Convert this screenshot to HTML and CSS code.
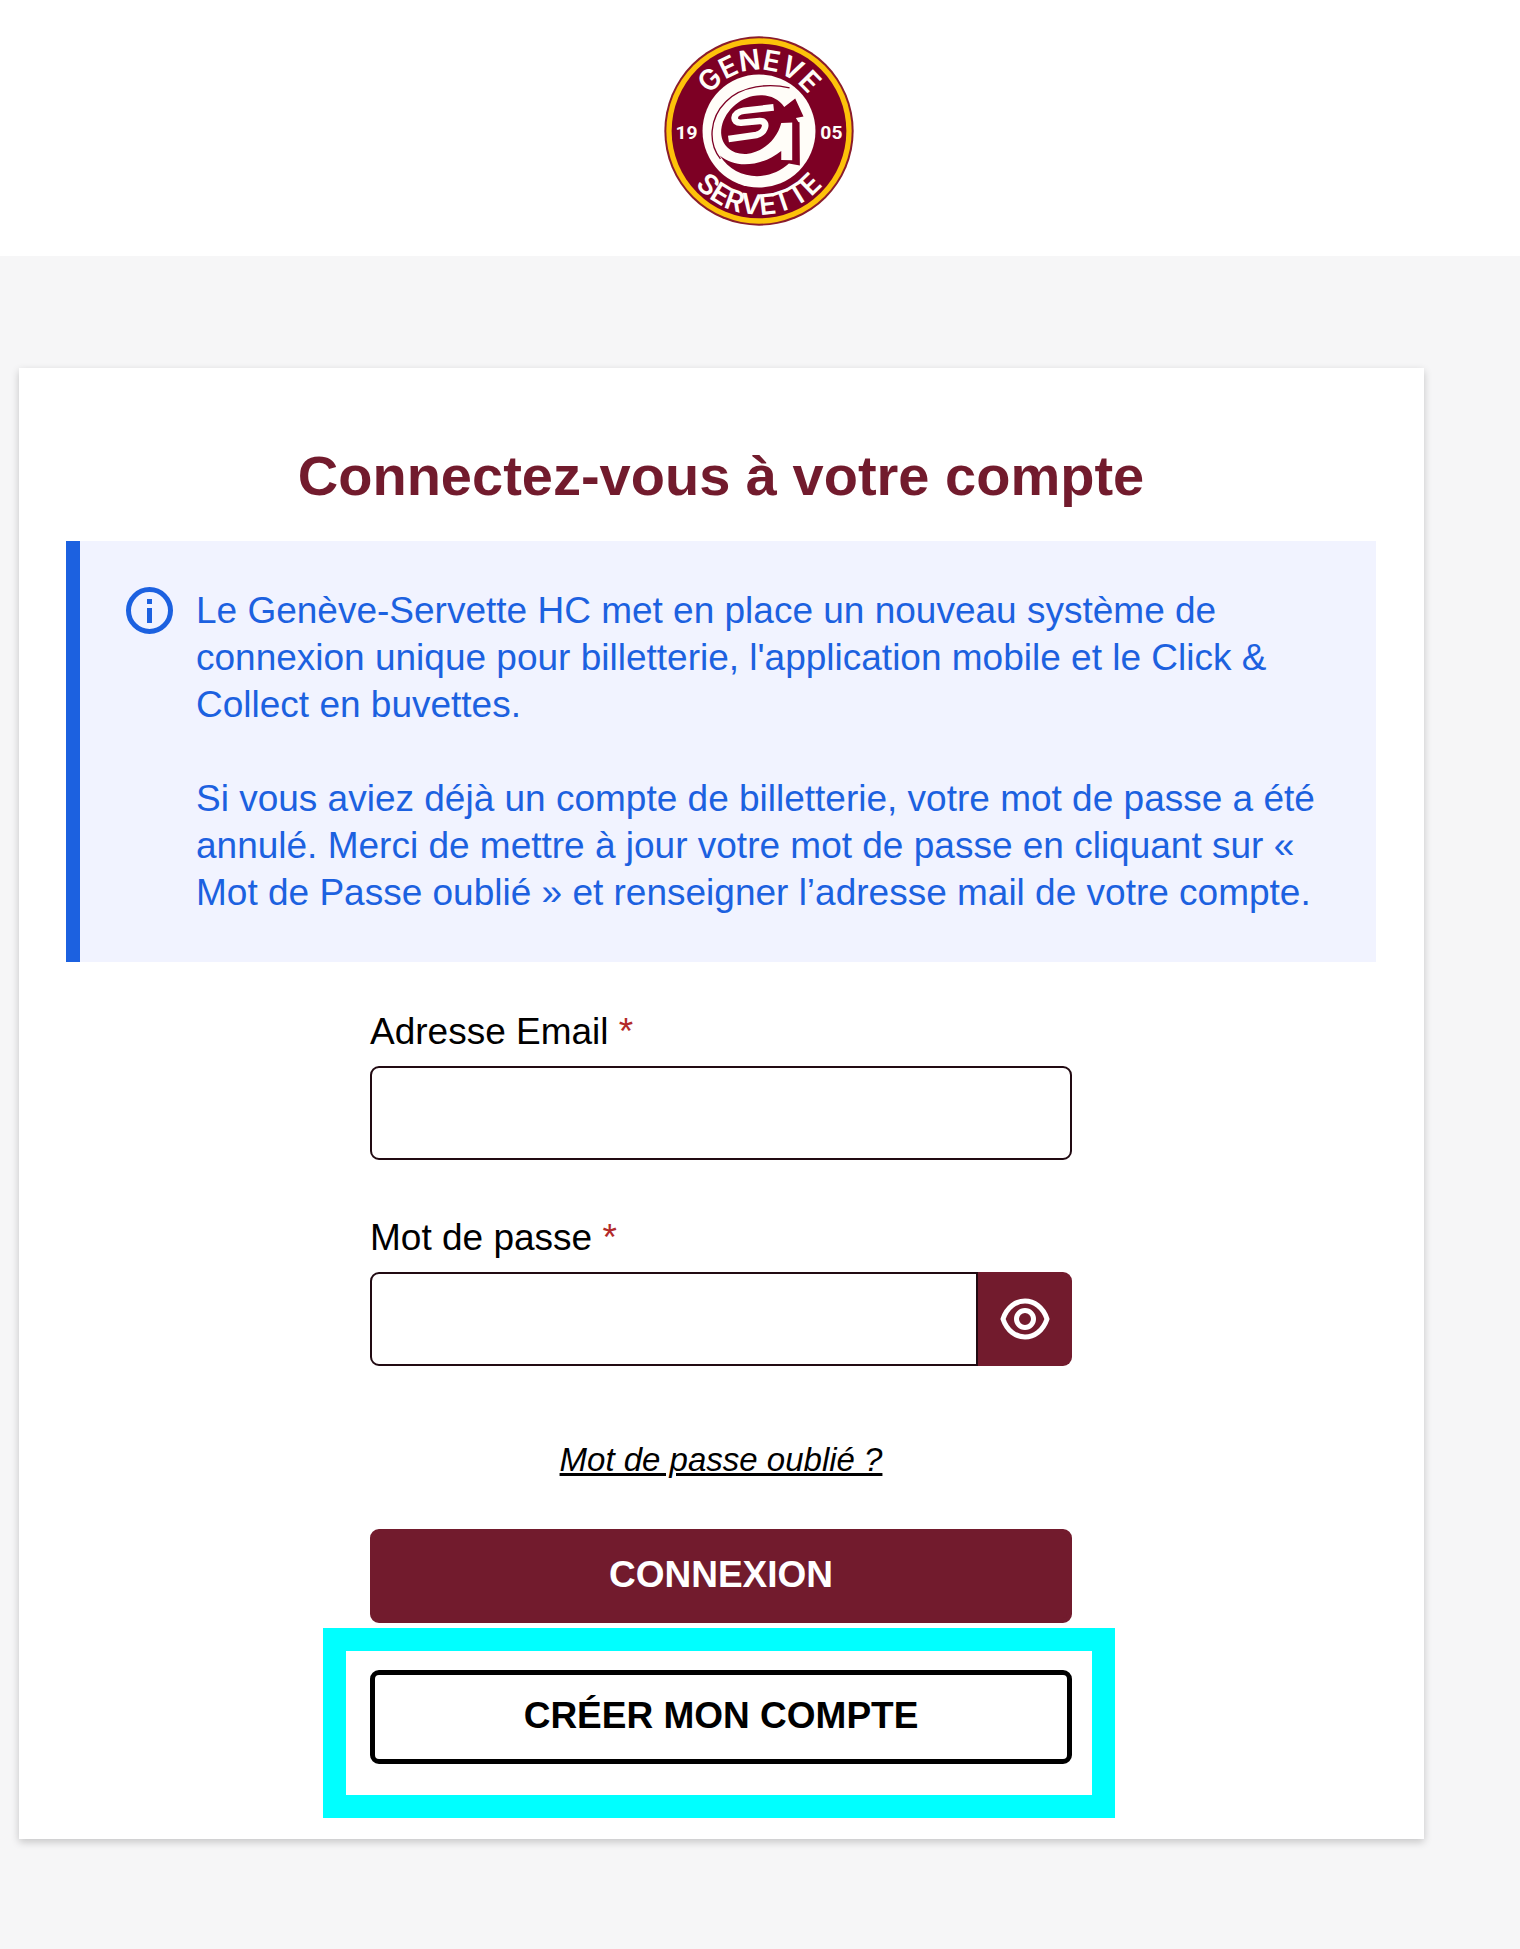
FILE: index.html
```html
<!DOCTYPE html>
<html lang="fr">
<head>
<meta charset="utf-8">
<meta name="viewport" content="width=device-width, initial-scale=1">
<title>Connexion – Genève-Servette HC</title>
<link rel="stylesheet" href="styles.css">
</head>
<body>
<header class="site-header">
  <svg class="logo" viewBox="42 48 572 572" role="img" aria-label="Genève Servette 1905">
    <defs>
      <path id="arc-top" d="M144 334 A184 184 0 0 1 512 334"/>
      <path id="arc-bottom" d="M76 334 A252 252 0 0 0 580 334"/>
    </defs>
    <circle cx="328" cy="334" r="285" fill="#8a1c2c"/>
    <circle cx="328" cy="334" r="279" fill="#fdc20a"/>
    <circle cx="328" cy="334" r="263" fill="#7d0024"/>
    <text class="logo-name"><textPath href="#arc-top" startOffset="50%">GENEVE</textPath></text>
    <text class="logo-name"><textPath href="#arc-bottom" startOffset="50%">SERVETTE</textPath></text>
    <text class="logo-year" x="110" y="358">19</text>
    <text class="logo-year" x="546" y="358">05</text>
    <g transform="translate(150 156)">
      <circle cx="178" cy="178" r="170" fill="#fffdf8"/>
      <path d="M270 48 C210 34 125 40 78 90 C28 140 24 215 62 262" fill="none" stroke="#7d0024" stroke-width="4"/>
      <path d="M60 252 C105 292 185 286 245 238 L245 265 L278 266 L278 148 L300 152 L301 282 L268 276 C205 334 105 325 60 252Z" fill="#7d0024"/>
      <path d="M254 106 L287 80 L312 134 L289 139 L297 152 L245 154 C232 205 188 243 140 247 C96 249 66 222 64 184 C64 132 108 84 160 73 C198 65 234 76 254 106Z" fill="#7d0024"/>
      <path d="M222 107 L132 117 C98 122 96 154 124 153 L180 148 C208 147 198 183 170 190 L86 202" fill="none" stroke="#fffdf8" stroke-width="20"/>
    </g>
  </svg>
</header>
<main class="card">
  <h1 class="title">Connectez-vous à votre compte</h1>
  <section class="notice">
    <svg class="notice-icon" viewBox="0 0 47 47" aria-hidden="true">
      <circle cx="23.500" cy="23.500" r="21" fill="none" stroke="#1c61e0" stroke-width="5"/>
      <path d="M21 12h5v5h-5zM21 21h5v15h-5z" fill="#1c61e0"/>
    </svg>
    <div class="notice-text">
      <p>Le Genève-Servette HC met en place un nouveau système de connexion unique pour billetterie, l'application mobile et le Click &amp; Collect en buvettes.</p>
      <p>Si vous aviez déjà un compte de billetterie, votre mot de passe a été annulé. Merci de mettre à jour votre mot de passe en cliquant sur « Mot de Passe oublié » et renseigner l’adresse mail de votre compte.</p>
    </div>
  </section>
  <form class="form">
    <div class="field">
      <label for="email">Adresse Email <span class="required">*</span></label>
      <input class="input" id="email" type="email" required>
    </div>
    <div class="field">
      <label for="password">Mot de passe <span class="required">*</span></label>
      <div class="password">
        <input class="input" id="password" type="password" required>
        <button class="reveal" type="button" aria-label="Afficher le mot de passe">
          <svg class="eye" viewBox="0 0 50 42" aria-hidden="true" fill="none" stroke="#fff" stroke-width="5">
            <path d="M3 21 C11 -3 39 -3 47 21 C39 45 11 45 3 21Z" stroke-linejoin="round"/>
            <circle cx="25" cy="21" r="8.500"/>
          </svg>
        </button>
      </div>
    </div>
    <a class="forgot" href="#">Mot de passe oublié ?</a>
    <div class="actions">
      <button class="button primary" type="submit">CONNEXION</button>
      <div class="highlighted">
        <button class="button secondary" type="button">CRÉER MON COMPTE</button>
      </div>
    </div>
  </form>
</main>
</body>
</html>
```
FILE: styles.css
```css
* {
  box-sizing: border-box;
}

body {
  margin: 0;
  min-height: 100vh;
  background: #f6f6f7;
  color: #000;
  font: 37px/47px "Liberation Sans", Arial, sans-serif;
}

.site-header {
  display: flex;
  justify-content: center;
  padding: 36px 2px 30px 0;
  background: #fff;
}

.logo {
  display: block;
  width: 190px;
  height: 190px;
}

.logo-name,
.logo-year {
  fill: #fffdf8;
  text-anchor: middle;
}

.logo-name {
  font-family: Inter, "Liberation Sans", sans-serif;
  font-size: 85px;
  font-weight: 600;
}

.logo-year {
  font-family: Roboto, "Liberation Sans", sans-serif;
  font-size: 58px;
  font-weight: 700;
}

.card {
  margin: 112px 96px 110px 19px;
  padding: 75px 48px 75px 47px;
  background: #fff;
  box-shadow: 0 3px 8px rgba(0, 0, 0, 0.2);
}

.title {
  margin: 0 0 32px;
  color: #721b2d;
  font-size: 56px;
  line-height: 66px;
  text-align: center;
}

.notice {
  display: flex;
  gap: 23px;
  padding: 46px;
  border-left: 14px solid #1c61e0;
  background: #f1f3ff;
  color: #1c61e0;
}

.notice-icon {
  flex: none;
  width: 47px;
  height: 47px;
}

.notice-text {
  display: grid;
  gap: 47px;
}

.notice-text p {
  margin: 0;
}

.form {
  display: flex;
  flex-direction: column;
  max-width: 702px;
  margin: 46px auto 0;
}

.field {
  display: flex;
  flex-direction: column;
  gap: 11px;
}

.field + .field {
  margin-top: 54px;
}

.required {
  color: #b32a2a;
}

.input {
  width: 100%;
  min-width: 0;
  height: 94px;
  padding: 0 23px;
  border: 2px solid #210a12;
  border-radius: 9px;
  background: #fff;
  font: inherit;
}

.password {
  display: flex;
}

.password .input {
  border-radius: 9px 0 0 9px;
}

.reveal {
  display: flex;
  flex: none;
  align-items: center;
  justify-content: center;
  width: 94px;
  padding: 0;
  border: 0;
  border-radius: 0 9px 9px 0;
  background: #721b2d;
}

.eye {
  width: 50px;
  height: 42px;
}

.forgot {
  align-self: center;
  margin: 74px 0 49px;
  color: #000;
  font-size: 33px;
  font-style: italic;
  line-height: 40px;
}

.actions {
  display: grid;
  gap: 47px;
}

.button {
  display: block;
  width: 100%;
  height: 94px;
  padding: 0 0 4px;
  border: 5px solid #721b2d;
  border-radius: 9px;
  font: inherit;
  font-weight: 700;
}

.primary {
  background: #721b2d;
  color: #fff;
}

.secondary {
  border-color: #000;
  background: #fff;
  color: #000;
}

.highlighted {
  position: relative;
}

.highlighted::after {
  content: "";
  position: absolute;
  inset: -42px -43px -54px -47px;
  border: 23px solid #0ff;
  pointer-events: none;
}
```
